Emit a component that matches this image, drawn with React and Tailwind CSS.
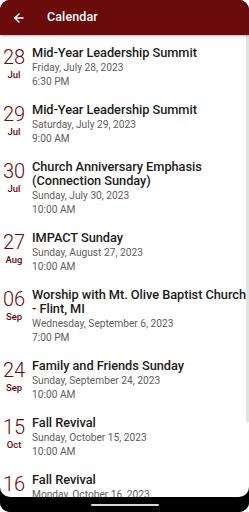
import { ArrowLeft } from 'lucide-react'

const EVENTS = [
  { day: '28', mon: 'Jul', title: 'Mid-Year Leadership Summit', date: 'Friday, July 28, 2023', time: '6:30 PM' },
  { day: '29', mon: 'Jul', title: 'Mid-Year Leadership Summit', date: 'Saturday, July 29, 2023', time: '9:00 AM' },
  { day: '30', mon: 'Jul', title: 'Church Anniversary Emphasis (Connection Sunday)', date: 'Sunday, July 30, 2023', time: '10:00 AM' },
  { day: '27', mon: 'Aug', title: 'IMPACT Sunday', date: 'Sunday, August 27, 2023', time: '10:00 AM' },
  { day: '06', mon: 'Sep', title: 'Worship with Mt. Olive Baptist Church - Flint, MI', date: 'Wednesday, September 6, 2023', time: '7:00 PM' },
  { day: '24', mon: 'Sep', title: 'Family and Friends Sunday', date: 'Sunday, September 24, 2023', time: '10:00 AM' },
  { day: '15', mon: 'Oct', title: 'Fall Revival', date: 'Sunday, October 15, 2023', time: '10:00 AM' },
  { day: '16', mon: 'Oct', title: 'Fall Revival', date: 'Monday, October 16, 2023', time: '10:00 AM' },
]

export default function App() {
  return (
    <div className="w-[249px] h-[512px] bg-white overflow-hidden" style={{ fontFamily: 'Roboto, "Noto Sans", sans-serif' }}>
      <div className="h-full rounded-[10px] bg-black overflow-hidden flex flex-col">
        {/* Toolbar */}
        <div className="h-[35px] shrink-0 bg-[#6a0a0a] flex items-center shadow-[0_1px_3px_rgba(0,0,0,0.3)] z-10">
          <ArrowLeft size={14} strokeWidth={2.5} className="text-white ml-[12px]" />
          <span className="ml-[21px] text-white text-[12.5px] font-medium tracking-[0.1px]">Calendar</span>
        </div>

        {/* List */}
        <div className="flex-1 bg-white rounded-b-[10px] overflow-hidden relative">
          <div className="pt-[11px]">
            {EVENTS.map((ev, i) => (
              <div key={i} className="flex pb-[14px]">
                <div className="w-[28px] shrink-0 flex flex-col items-center text-[#6a0a0a]">
                  <span className="text-[20px] leading-[22px] font-light">{ev.day}</span>
                  <span className="text-[9.5px] leading-[11px] font-medium mt-[1px]">{ev.mon}</span>
                </div>
                <div className="ml-[4px] min-w-0 flex-1">
                  <p className="text-[12.8px] leading-[14px] font-medium text-[#1c1c1c] tracking-[-0.05px]">{ev.title}</p>
                  <p className="text-[10.2px] leading-[14px] text-[#606060] mt-[1px]">{ev.date}</p>
                  <p className="text-[10.2px] leading-[14px] text-[#606060]">{ev.time}</p>
                </div>
              </div>
            ))}
          </div>
          <div className="absolute right-0 top-0 w-[3px] h-[387px] bg-[#e2e2e2]" />
        </div>

        {/* Nav bar */}
        <div className="h-[15px] shrink-0 bg-black flex justify-center pt-[7px]">
          <div className="w-[68px] h-[2px] rounded-full bg-[#d8d8d8]" />
        </div>
      </div>
    </div>
  )
}
